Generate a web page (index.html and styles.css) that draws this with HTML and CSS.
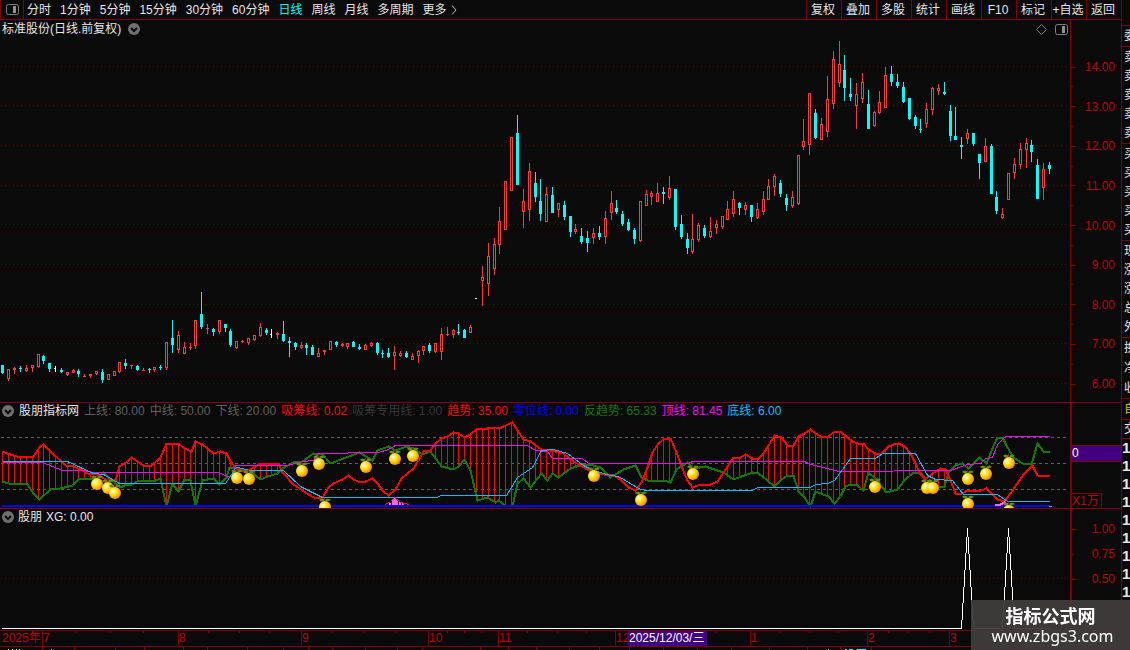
FILE: index.html
```html
<!DOCTYPE html>
<html lang="zh-CN">
    <head>
        <meta charset="UTF-8">
        <meta name="viewport" content="width=device-width, initial-scale=1.0">
        <link rel="stylesheet" href="styles.css">
        <title>标准股份 日线</title>
    </head>
    <body>
        <main class="terminal">
            <!--======================= 工具栏 =======================-->
            <nav class="toolbar">
                <button type="button" class="layoutButton" aria-label="布局">
                    <svg class="panelIcon" viewBox="0 0 13 11"><rect class="frame" x="0.5" y="0.5" width="12" height="10" rx="2"/><rect class="fill" x="7" y="2" width="3" height="7"/></svg>
                </button>
                <div class="periods">
                    <button type="button">分时</button>
                    <button type="button">1分钟</button>
                    <button type="button">5分钟</button>
                    <button type="button">15分钟</button>
                    <button type="button">30分钟</button>
                    <button type="button">60分钟</button>
                    <button type="button" class="active">日线</button>
                    <button type="button">周线</button>
                    <button type="button">月线</button>
                    <button type="button">多周期</button>
                    <button type="button" class="more">更多<svg viewBox="0 0 6 10"><path d="M1 0.5L5 5L1 9.5"/></svg></button>
                </div>
                <div class="tools">
                    <button type="button">复权</button>
                    <button type="button">叠加</button>
                    <button type="button">多股</button>
                    <button type="button">统计</button>
                    <button type="button">画线</button>
                    <button type="button">F10</button>
                    <button type="button">标记</button>
                    <button type="button">+自选</button>
                    <button type="button">返回</button>
                </div>
            </nav>

            <!--======================= K线主图 =======================-->
            <section class="pane mainPane">
                <div class="plot">
                    <svg id="kline" class="chart" viewBox="0 20 1070 382" preserveAspectRatio="none"></svg>
                    <div class="paneTitle">
                        <h1>标准股份(日线.前复权)</h1>
                        <svg class="foldIcon" viewBox="0 0 12 12"><circle cx="6" cy="6" r="6"/><path d="M3 5L6 8L9 5"/></svg>
                    </div>
                    <div class="paneTools">
                        <svg class="diamondIcon" viewBox="0 0 11 11"><path d="M5.5 0.5L10.5 5.5L5.5 10.5L0.5 5.5Z"/></svg>
                        <svg class="panelIcon" viewBox="0 0 13 11"><rect class="frame" x="0.5" y="0.5" width="12" height="10" rx="2"/><rect class="fill" x="7" y="2" width="3" height="7"/></svg>
                    </div>
                </div>
                <ul class="axis priceAxis">
                    <li>14.00</li><li class="minor"></li>
                    <li>13.00</li><li class="minor"></li>
                    <li>12.00</li><li class="minor"></li>
                    <li>11.00</li><li class="minor"></li>
                    <li>10.00</li><li class="minor"></li>
                    <li>9.00</li><li class="minor"></li>
                    <li>8.00</li><li class="minor"></li>
                    <li>7.00</li><li class="minor"></li>
                    <li>6.00</li>
                </ul>
            </section>

            <!--======================= 副图1 =======================-->
            <section class="pane trendPane">
                <div class="plot">
                    <svg id="trend" class="chart" viewBox="0 403 1070 105" preserveAspectRatio="none">
                        <defs>
                            <radialGradient id="peel" cx="0.35" cy="0.35" r="0.7">
                                <stop offset="0" stop-color="#fffde0"/>
                                <stop offset="0.4" stop-color="#ffe428"/>
                                <stop offset="0.8" stop-color="#ffa800"/>
                                <stop offset="1" stop-color="#e87800"/>
                            </radialGradient>
                            <g id="lemon">
                                <path d="M-6 -7Q-4 -10 0 -7Q3 -10 6 -7Q2 -5 0 -6Q-3 -4 -6 -7Z" fill="#5f9400"/>
                                <path d="M-1 -10L0 -9L1 -5L-1 -5Z" fill="#5a3010"/>
                                <circle cx="0" cy="0" r="6" fill="url(#peel)"/>
                            </g>
                        </defs>
                    </svg>
                    <div class="paneTitle">
                        <svg class="foldIcon" viewBox="0 0 12 12"><circle cx="6" cy="6" r="6"/><path d="M3 5L6 8L9 5"/></svg>
                        <h2>股朋指标网</h2>
                        <span class="grey">上线: 80.00</span>
                        <span class="grey">中线: 50.00</span>
                        <span class="grey">下线: 20.00</span>
                        <span class="red">吸筹线: 0.02</span>
                        <span class="dark">吸筹专用线: 1.00</span>
                        <span class="red">趋势: 35.00</span>
                        <span class="blue">零位线: 0.00</span>
                        <span class="green">反趋势: 65.33</span>
                        <span class="magenta">顶线: 81.45</span>
                        <span class="sky">底线: 6.00</span>
                    </div>
                </div>
                <div class="axis trendAxis">
                    <output class="cursorValue">0</output>
                    <span class="unit">X1万</span>
                </div>
            </section>

            <!--======================= 副图2 =======================-->
            <section class="pane signalPane">
                <div class="plot">
                    <svg id="signal" class="chart" viewBox="0 509 1070 121" preserveAspectRatio="none"></svg>
                    <div class="paneTitle">
                        <svg class="foldIcon" viewBox="0 0 12 12"><circle cx="6" cy="6" r="6"/><path d="M3 5L6 8L9 5"/></svg>
                        <h2>股朋</h2>
                        <span>XG: 0.00</span>
                    </div>
                </div>
                <ul class="axis signalAxis">
                    <li>1.00</li>
                    <li class="short">0.75</li>
                    <li>0.50</li>
                </ul>
            </section>

            <!--======================= 时间轴 =======================-->
            <div class="timeAxis">
                <span class="year">2025年</span>
                <span>7</span>
                <span>8</span>
                <span>9</span>
                <span>10</span>
                <span>11</span>
                <span>12<time class="cursorDate" datetime="2025-12-03">2025/12/03/三</time></span>
                <span>1</span>
                <span>2</span>
                <span>3</span>
                <svg id="weeks" class="weeks" viewBox="0 0 1121 3" preserveAspectRatio="none"></svg>
            </div>
            <svg id="tabs" class="tabs" viewBox="0 0 1121 3" preserveAspectRatio="none"></svg>
        </main>

        <!--======================= 盘口 =======================-->
        <aside class="quote">
            <div class="group head">委</div>
            <div class="group"><span>卖</span><span>卖</span><span>卖</span><span>卖</span><span>卖</span></div>
            <div class="group"><span>买</span><span>买</span><span>买</span><span>买</span><span>买</span></div>
            <div class="group"><span>现</span><span>涨</span><span>涨</span><span>总</span><span>外</span></div>
            <div class="group wide"><span>换</span><span>净</span><span>收</span></div>
            <div class="group wide own">自</div>
            <div class="group trade">交</div>
            <div class="group deals"><span>1</span><span>1</span><span>1</span><span>1</span><span>1</span><span>1</span><span>1</span><span>1</span><span>1</span></div>
        </aside>

        <footer class="brand">
            <strong>指标公式网</strong>
            <span>www.zbgs3.com</span>
        </footer>

        <script src="chart.js"></script>
    </body>
</html>
```
FILE: styles.css
```css
*{
    box-sizing: border-box;
}

body{
    margin: 0;
    display: flex;
    height: 100vh;
    overflow: hidden;
    background-color: #0a0a0a;
    color: #e6e6e6;
    font-family: "Liberation Sans", "Noto Sans CJK SC", sans-serif;
    font-size: 12px;
    line-height: 16px;
}

h1, h2{
    margin: 0;
    font-size: 12px;
    font-weight: 400;
}

ul{
    margin: 0;
    padding: 0;
    list-style: none;
}

button{
    padding: 0;
    border: none;
    background: none;
    color: inherit;
    font: inherit;
    white-space: nowrap;
    cursor: pointer;
}

.terminal{
    flex: 1;
    min-width: 0;
    display: flex;
    flex-direction: column;
}

/*************************************************************************************************/

/* 工具栏 */
.toolbar{
    display: flex;
    flex: none;
    height: 20px;
    border-bottom: 1px solid #800000;
}

.layoutButton{
    width: 24px;
    border-left: 1px solid #800000;
    border-right: 1px solid #800000;
    line-height: 0;
}

.periods{
    display: flex;
    gap: 9px;
    padding-left: 3px;
}

.periods .active{
    color: #00ffff;
}

.more{
    display: flex;
    align-items: center;
    gap: 4px;
}

.more svg{
    width: 6px;
    height: 10px;
    fill: none;
    stroke: #c0c0c0;
}

.tools{
    display: flex;
    margin-left: auto;
}

.tools button{
    width: 35px;
    padding-right: 2px;
    border-left: 1px solid #800000;
}

/*************************************************************************************************/

/* 图标 */
.panelIcon{
    width: 13px;
    height: 11px;
}

.panelIcon .frame{
    fill: none;
    stroke: #808080;
}

.panelIcon .fill{
    fill: #909090;
}

.foldIcon{
    width: 12px;
    height: 12px;
    fill: #707070;
}

.foldIcon path{
    fill: none;
    stroke: #0a0a0a;
    stroke-width: 2;
}

.diamondIcon{
    width: 11px;
    height: 11px;
    fill: none;
    stroke: #808080;
}

/*************************************************************************************************/

/* 图表区 */
.pane{
    display: flex;
    flex: none;
    border-bottom: 1px solid #800000;
}

.mainPane{
    flex: 1;
    min-height: 0;
}

.trendPane{
    height: 106px;
}

.signalPane{
    height: 122px;
}

.plot{
    position: relative;
    flex: 1;
    min-width: 0;
}

.chart{
    display: block;
    width: 100%;
    height: 100%;
    shape-rendering: crispEdges;
}

.paneTitle{
    position: absolute;
    top: 0;
    left: 2px;
    display: flex;
    align-items: center;
    gap: 4px;
    white-space: nowrap;
}

.mainPane .paneTitle{
    top: 1px;
    gap: 7px;
}

.trendPane .paneTitle{
    gap: 5px;
}

.paneTools{
    position: absolute;
    top: 4px;
    right: 2px;
    display: flex;
    gap: 8px;
}

.grey{ color: #606060; }
.dark{ color: #383838; }
.red{ color: #ff0000; }
.blue{ color: #0000ff; }
.green{ color: #147814; }
.magenta{ color: #ff00ff; }
.sky{ color: #00bfff; }

/*************************************************************************************************/

/* 纵坐标 */
.axis{
    display: flex;
    flex: none;
    flex-direction: column;
    width: 51px;
    border-left: 1px solid #800000;
    color: #c00000;
}

.axis li{
    display: flex;
    align-items: center;
    justify-content: space-between;
    height: 16px;
    padding-right: 6px;
}

.axis li::before{
    content: "";
    width: 5px;
    height: 1px;
    background-color: #800000;
}

.axis .minor::before, .axis .short::before{
    width: 2px;
}

.priceAxis{
    justify-content: space-between;
    padding: 39px 0 10px;
}

.trendAxis{
    align-items: flex-start;
    justify-content: space-between;
    padding-top: 42px;
    border-left-width: 2px;
}

.cursorValue{
    align-self: stretch;
    border: solid #800000;
    border-width: 1px 0;
    background-color: #400080;
    color: #ffffff;
    line-height: 15px;
}

.unit{
    padding: 0 2px 0 0;
    border: solid #800000;
    border-width: 1px 1px 0 0;
    line-height: 14px;
}

.signalAxis{
    gap: 9px;
    padding-top: 12px;
    border-left-width: 2px;
}

/*************************************************************************************************/

/* 时间轴 */
.timeAxis{
    position: relative;
    display: grid;
    flex: none;
    grid-template-columns: 42fr 136fr 123fr 127fr 70fr 117fr 135fr 117fr 82fr 172fr;
    height: 16px;
    border-bottom: 1px solid #800000;
    color: #c00000;
}

.timeAxis span{
    position: relative;
    border-left: 1px solid #800000;
    line-height: 15px;
    white-space: nowrap;
}

.timeAxis .year{
    padding-left: 2px;
    border-left: none;
}

.cursorDate{
    position: absolute;
    top: 0;
    left: 12px;
    width: 79px;
    padding-left: 1px;
    background-color: #400080;
    color: #ffffff;
}

.weeks{
    position: absolute;
    top: 0;
    left: 0;
    width: 100%;
    height: 3px;
}

.tabs{
    flex: none;
    width: 100%;
    height: 3px;
}

/*************************************************************************************************/

/* 右侧盘口 */
.quote{
    flex: none;
    width: 9px;
    padding-top: 25px;
    border-left: 1px solid #800000;
    overflow: hidden;
}

.group{
    display: flex;
    flex-direction: column;
    width: 16px;
    padding: 1px 0 0 2px;
    border-top: 1px solid #800000;
    line-height: 19px;
}

.group span{
    display: block;
}

.head, .wide{
    padding-top: 0;
    line-height: 20px;
}

.own{
    color: #c8c800;
}

.trade{
    padding-top: 0;
    line-height: 18px;
}

.deals{
    padding: 0;
    font-size: 15px;
    font-weight: 600;
    line-height: 18px;
}

/*************************************************************************************************/

/* 角标 */
.brand{
    position: fixed;
    right: 0;
    bottom: 0;
    display: flex;
    flex-direction: column;
    align-items: center;
    width: 159px;
    padding: 5px 0 3px;
    background-color: rgba(64, 60, 60, 0.95);
    color: #ffffff;
    line-height: 21px;
}

.brand strong{
    font-family: "Noto Sans CJK SC", sans-serif;
    font-size: 18px;
}

.brand span{
    padding-left: 4px;
    font-family: "Noto Sans", sans-serif;
    font-size: 16px;
}
```
FILE: chart.js
```js
const NS = "http://www.w3.org/2000/svg";
const UP = 1;
const DOWN = -1;
const FLAT = 0;
const COLORS = { [UP]: "#ff3c3c", [DOWN]: "#00ffff", [FLAT]: "#ffffff" };

// K线: [x, 最高, 实体上, 实体下, 最低, 涨跌]
const CANDLES = [
    [2,365,365,373,374,-1],[8,369,369,379,381,1],[14,367,368,370,374,1],[20,366,368,369,372,-1],
    [26,365,368,371,372,1],[32,365,365,368,372,1],[38,354,354,367,368,1],[43,355,356,361,364,-1],
    [49,363,363,369,372,-1],[55,366,368,369,372,0],[61,368,370,372,373,-1],[67,372,372,375,376,1],
    [73,369,370,373,373,1],[78,369,371,374,377,-1],[84,374,376,377,377,1],[90,374,374,376,378,1],
    [96,371,371,374,375,1],[102,369,372,380,383,-1],[108,374,374,380,380,1],[114,371,371,376,376,1],
    [119,362,362,372,373,1],[125,359,363,366,369,-1],[131,365,365,366,369,1],[137,365,366,370,371,-1],
    [143,368,370,371,371,1],[149,368,369,370,373,-1],[154,367,367,370,372,1],[160,365,367,368,370,-1],
    [166,342,342,368,370,1],[172,320,338,345,353,-1],[178,331,335,350,353,1],[184,342,347,354,354,1],
    [190,343,347,348,350,1],[195,320,320,346,349,1],[201,292,314,327,329,-1],[207,324,328,329,334,1],
    [213,328,329,332,336,-1],[219,320,320,332,334,1],[225,324,324,328,332,-1],[230,329,331,345,347,-1],
    [236,341,341,348,349,1],[242,340,341,342,343,1],[248,338,338,343,345,1],[254,335,335,340,341,1],
    [260,323,327,336,337,1],[266,328,330,333,335,-1],[271,329,334,335,338,0],[277,332,333,335,339,1],
    [283,321,334,341,342,-1],[289,337,341,343,357,-1],[295,342,343,347,350,-1],[301,342,345,348,349,1],
    [306,343,345,348,355,-1],[312,345,347,355,355,-1],[318,348,353,357,357,1],[324,350,350,352,355,1],
    [330,341,341,350,350,1],[336,341,342,345,347,-1],[342,343,344,346,347,1],[347,343,343,347,349,1],
    [353,341,342,347,347,-1],[359,344,347,349,350,-1],[365,344,345,350,350,1],[371,342,343,346,347,1],
    [377,342,343,353,355,-1],[382,350,353,354,358,-1],[388,348,353,357,358,-1],[394,346,352,356,370,1],
    [400,351,353,356,357,1],[406,351,353,357,358,-1],[412,353,356,360,360,1],[418,350,351,356,363,1],
    [423,346,346,351,355,1],[429,343,345,351,353,-1],[435,343,343,352,353,1],[441,328,334,352,360,1],
    [447,327,334,335,336,1],[453,329,330,335,338,1],[458,324,332,333,335,-1],[464,329,330,338,338,-1],
    [470,325,327,333,333,1],[476,298,298,299,299,0],[482,266,277,281,306,1],[488,243,256,284,296,1],
    [494,238,244,269,275,1],[499,207,221,245,254,1],[505,181,181,230,230,1],[511,137,137,191,191,1],
    [517,115,133,185,185,-1],[523,189,201,212,228,1],[529,163,171,210,221,1],[535,172,183,197,202,-1],
    [540,179,201,214,221,-1],[546,187,194,222,222,1],[552,187,195,213,213,-1],[558,203,203,210,217,1],
    [564,201,205,217,220,-1],[570,216,216,232,237,-1],[575,224,229,232,234,1],[581,228,236,242,244,-1],
    [587,231,238,243,252,-1],[593,228,233,238,244,1],[599,226,233,237,240,-1],[605,211,218,237,244,1],
    [611,191,203,213,220,1],[616,200,208,212,214,-1],[622,211,214,224,226,-1],[628,219,222,230,231,-1],
    [634,228,230,239,244,-1],[640,201,201,241,242,1],[646,190,194,206,206,1],[651,191,193,197,205,1],
    [657,183,193,202,202,1],[663,187,192,194,204,-1],[669,176,188,198,200,1],[675,189,189,227,230,-1],
    [681,215,224,237,239,-1],[687,233,239,248,254,-1],[692,214,239,252,254,1],[698,223,225,240,242,1],
    [704,225,228,236,238,-1],[710,217,231,237,238,1],[716,220,224,228,234,1],[722,216,216,227,229,1],
    [727,201,209,220,220,1],[733,191,199,214,217,1],[739,202,203,208,215,-1],[745,202,205,210,215,1],
    [751,205,205,217,222,-1],[757,203,209,218,219,1],[763,191,199,212,215,1],[768,179,186,200,200,1],
    [774,174,176,187,196,1],[780,180,183,194,197,-1],[786,194,198,205,211,-1],[792,191,197,206,208,1],
    [798,155,155,204,205,1],[803,119,141,147,150,1],[809,93,93,145,155,1],[815,109,113,138,139,-1],
    [821,118,124,140,140,1],[827,76,99,132,137,1],[833,51,59,104,109,1],[839,41,64,83,87,1],
    [844,55,70,88,101,-1],[850,78,94,97,101,-1],[856,83,94,106,129,1],[862,73,82,99,103,1],
    [868,90,104,129,129,-1],[874,111,112,126,127,1],[879,91,102,113,114,1],[885,67,75,108,108,1],
    [891,66,74,82,86,-1],[897,74,82,86,88,-1],[903,82,87,102,103,-1],[909,98,98,119,120,-1],
    [915,115,117,126,129,-1],[920,119,129,130,133,-1],[926,103,109,124,128,1],[932,87,88,110,115,1],
    [938,84,88,91,95,1],[944,82,92,94,95,-1],[950,105,111,136,141,-1],[955,107,136,140,140,-1],
    [961,137,145,147,159,-1],[967,129,133,139,144,1],[973,133,133,144,146,-1],[979,154,154,163,179,-1],
    [985,138,146,162,162,1],[991,144,146,194,194,-1],[996,191,197,211,214,-1],[1002,208,214,218,219,1],
    [1008,173,173,200,200,1],[1014,158,164,173,179,1],[1020,143,149,165,169,1],[1026,138,143,150,168,1],
    [1031,140,145,152,162,-1],[1037,159,165,199,199,-1],[1043,163,169,188,200,1],[1049,162,165,169,174,-1]
];

const PRICE_LINES = [66, 105, 145, 185, 224, 264, 304, 343, 383];

// 趋势
const TREND = [
    [2,451],[7,453],[16,456],[33,456],[39,447],[43,444],[50,451],[65,465],[73,466],[80,469],[87,473],[97,474],
    [105,479],[115,480],[119,466],[127,461],[131,457],[137,461],[143,465],[150,466],[160,457],[166,443],
    [178,443],[184,448],[191,451],[195,441],[202,444],[213,453],[220,451],[226,453],[230,461],[235,467],
    [242,471],[250,469],[258,464],[267,463],[278,463],[282,472],[293,484],[305,492],[313,497],[322,497],
    [328,487],[333,483],[342,479],[348,475],[353,479],[360,482],[365,481],[372,478],[377,483],[383,491],
    [388,495],[395,489],[401,478],[407,473],[413,468],[418,460],[423,451],[430,450],[435,443],[441,438],
    [447,436],[453,432],[458,433],[464,437],[470,434],[477,428],[487,428],[495,427],[501,427],[512,422],
    [517,430],[523,439],[530,441],[541,449],[550,450],[563,453],[573,461],[587,469],[593,473],[613,475],
    [620,479],[628,487],[635,490],[641,482],[647,467],[652,452],[658,443],[664,438],[670,438],[676,452],
    [682,468],[687,480],[692,487],[700,484],[710,484],[717,481],[723,472],[733,457],[740,457],[745,454],
    [752,458],[758,458],[763,453],[768,445],[774,435],[781,437],[787,445],[793,445],[798,436],[804,433],
    [810,429],[815,433],[822,437],[828,436],[834,431],[840,431],[847,437],[852,441],[857,443],[863,443],
    [868,449],[875,453],[881,453],[888,446],[893,444],[898,443],[904,446],[910,453],[915,463],[920,474],
    [925,479],[932,473],[940,468],[945,469],[950,480],[955,493],[960,494],[967,490],[973,490],[978,491],
    [986,488],[992,494],[997,499],[1004,501],[1010,493],[1023,474],[1032,465],[1037,475],[1049,476]
];

// 反趋势
const REVERSE = [
    [2,481],[8,483],[27,484],[33,493],[39,499],[50,489],[60,488],[72,485],[79,478],[92,478],[97,477],[103,472],
    [108,477],[120,487],[124,485],[132,484],[138,480],[155,480],[160,478],[166,506],[172,483],[178,491],
    [184,479],[190,480],[195,506],[202,480],[213,478],[219,484],[226,477],[229,467],[233,467],[240,469],
    [250,471],[260,479],[267,476],[277,473],[282,468],[293,462],[302,461],[313,453],[322,454],[330,463],
    [343,458],[359,452],[372,460],[377,450],[388,446],[395,450],[406,446],[413,448],[422,454],[430,451],
    [441,466],[453,469],[458,466],[464,459],[470,470],[477,500],[487,497],[495,502],[498,500],[505,505],
    [512,506],[517,483],[523,478],[530,487],[541,473],[547,480],[552,473],[558,477],[570,468],[582,464],
    [593,465],[600,467],[610,477],[623,469],[635,465],[641,477],[647,480],[663,480],[670,482],[676,469],
    [687,462],[693,468],[705,466],[723,472],[733,479],[752,472],[758,473],[767,480],[774,486],[781,479],
    [787,475],[793,475],[798,491],[804,497],[810,506],[815,491],[828,496],[834,503],[840,496],[845,486],
    [850,484],[857,485],[863,490],[868,472],[875,478],[886,492],[897,489],[904,480],[913,472],[920,472],
    [928,482],[938,487],[944,486],[948,472],[955,465],[962,463],[968,468],[979,457],[986,463],[992,448],
    [997,437],[1002,437],[1007,447],[1013,457],[1022,463],[1031,464],[1037,443],[1043,451],[1049,451]
];

// 顶线
const TOP = [
    [2,462],[42,462],[62,470],[83,470],[93,472],[218,472],[227,476],[232,476],[235,465],[287,465],[302,461],
    [313,460],[318,453],[378,452],[388,449],[395,445],[527,445],[535,450],[547,451],[552,458],[582,458],
    [588,463],[688,463],[692,461],[804,461],[810,464],[823,467],[838,471],[950,470],[967,464],[980,463],
    [985,458],[992,457],[997,444],[1005,436],[1049,436]
];

// 底线
const BOTTOM = [
    [2,461],[67,461],[93,473],[103,474],[119,483],[225,483],[235,468],[237,467],[250,470],[283,470],[300,486],
    [322,497],[437,497],[440,495],[506,495],[517,477],[532,467],[541,450],[553,449],[567,453],[583,465],
    [593,470],[610,475],[618,476],[640,489],[647,490],[752,490],[757,487],[810,487],[815,484],[827,483],
    [834,480],[850,458],[875,458],[882,453],[915,453],[927,475],[935,479],[952,480],[963,494],[997,494],
    [1007,501],[1049,501]
];

const LEMONS = [
    [97,484],[108,488],[115,493],[237,478],[249,479],[302,471],[319,464],[325,507],[366,467],[395,459],[413,456],
    [594,476],[641,500],[693,474],[875,487],[927,488],[933,488],[968,479],[968,504],[986,474],[1009,463],[1009,511]
];

const WEEKS = [76, 110, 143, 208, 239, 269, 332, 364, 395, 447, 464, 481, 527, 557, 586, 716, 780, 809, 838, 888, 908, 929];
const TABS = [42, 74, 115, 144, 183, 207, 247, 283, 308, 332, 365, 397, 422, 480, 508, 536, 569, 599, 629, 663, 697, 731, 769, 807, 840, 871];

/** 在svg里追加一个图形 */
function draw(parent, tag, attrs){
    const node = document.createElementNS(NS, tag);
    for(const key in attrs){
        node.setAttribute(key, attrs[key]);
    }
    parent.appendChild(node);
    return node;
}

function rect(parent, x, y, width, height, fill){
    draw(parent, "rect", { x, y, width, height, fill });
}

function curve(parent, points, color, width){
    draw(parent, "polyline", {
        points: points.map(p => (p[0] + 0.5) + "," + (p[1] + 0.5)).join(" "),
        fill: "none",
        stroke: color,
        "stroke-width": width,
        "stroke-linejoin": "round"
    });
}

function rule(parent, y, dash, color){
    draw(parent, "line", { x1: 1, y1: y + 0.5, x2: 1067, y2: y + 0.5, stroke: color, "stroke-dasharray": dash });
}

/** 折线在x处的高度 */
function valueAt(points, x){
    for(let i = 1; i < points.length; ++i){
        if(x <= points[i][0]){
            const [x0, y0] = points[i - 1];
            const [x1, y1] = points[i];
            return Math.round(y0 + (y1 - y0) * (x - x0) / (x1 - x0));
        }
    }
    return points[points.length - 1][1];
}

function drawKline(){
    const svg = document.querySelector("#kline");
    PRICE_LINES.forEach(y => rule(svg, y, "1 3", "#780000"));
    CANDLES.forEach(([x, high, top, bottom, low, kind]) => {
        const color = COLORS[kind];
        if(kind === UP && bottom - top > 2){
            rect(svg, x, high, 1, top - high, color);
            rect(svg, x, bottom, 1, low - bottom, color);
            draw(svg, "rect", { x: x - 0.5, y: top + 0.5, width: 2, height: bottom - top - 1, fill: "none", stroke: color });
        }else{
            rect(svg, x, high, 1, low - high, color);
            rect(svg, x - 1, top, kind === FLAT ? 2 : 3, bottom - top, color);
        }
    });
}

function drawTrend(){
    const svg = document.querySelector("#trend");
    [437, 463, 489].forEach(y => rule(svg, y, "3 3", "#606060"));
    CANDLES.forEach(([x]) => {
        const up = valueAt(TREND, x);
        const down = valueAt(REVERSE, x);
        if(down - up > 2){
            rect(svg, x, up, 1, down - up, "#ff0000");
        }
    });
    curve(svg, REVERSE, "#147800", 2);
    curve(svg, TREND, "#ff0000", 2);
    curve(svg, TOP, "#ff00ff", 1);
    curve(svg, BOTTOM, "#00bfff", 1);
    rect(svg, 2, 505, 1048, 2, "#0000ff");

    // 吸筹
    [[389, 2], [392, 6], [394, 7], [396, 5], [399, 3], [402, 2]].forEach(([x, h]) => rect(svg, x, 505 - h, 2, h, "#ff60ff"));
    curve(svg, [[385, 504], [390, 501], [394, 497], [400, 502], [409, 504]], "#ff0060", 1);
    curve(svg, [[994, 504], [1000, 504], [1004, 502], [1008, 505]], "#ff60ff", 2);
    rect(svg, 1049, 506, 3, 1, "#ff60ff");

    LEMONS.forEach(([x, y]) => {
        draw(svg, "use", { href: "#lemon", x, y, "shape-rendering": "auto" });
    });
}

function drawSignal(){
    const svg = document.querySelector("#signal");
    rule(svg, 578, "1 3", "#780000");
    curve(svg, [[1, 628], [961, 628], [967, 528], [973, 628], [1002, 628], [1008, 528], [1014, 628], [1049, 628]], "#ffffff", 1);
}

function drawTicks(){
    const weeks = document.querySelector("#weeks");
    WEEKS.forEach(x => rect(weeks, x, 0, 1, 2, "#800000"));

    const tabs = document.querySelector("#tabs");
    TABS.forEach(x => rect(tabs, x, 0, 1, 3, "#800000"));
    [8, 12, 16, 19, 51, 828].forEach(x => rect(tabs, x, 2, 1, 1, "#e6e6e6"));
    [[845, 2], [849, 4], [857, 9]].forEach(([x, w]) => rect(tabs, x, 2, w, 1, "#00ffff"));
}

drawKline();
drawTrend();
drawSignal();
drawTicks();
```
